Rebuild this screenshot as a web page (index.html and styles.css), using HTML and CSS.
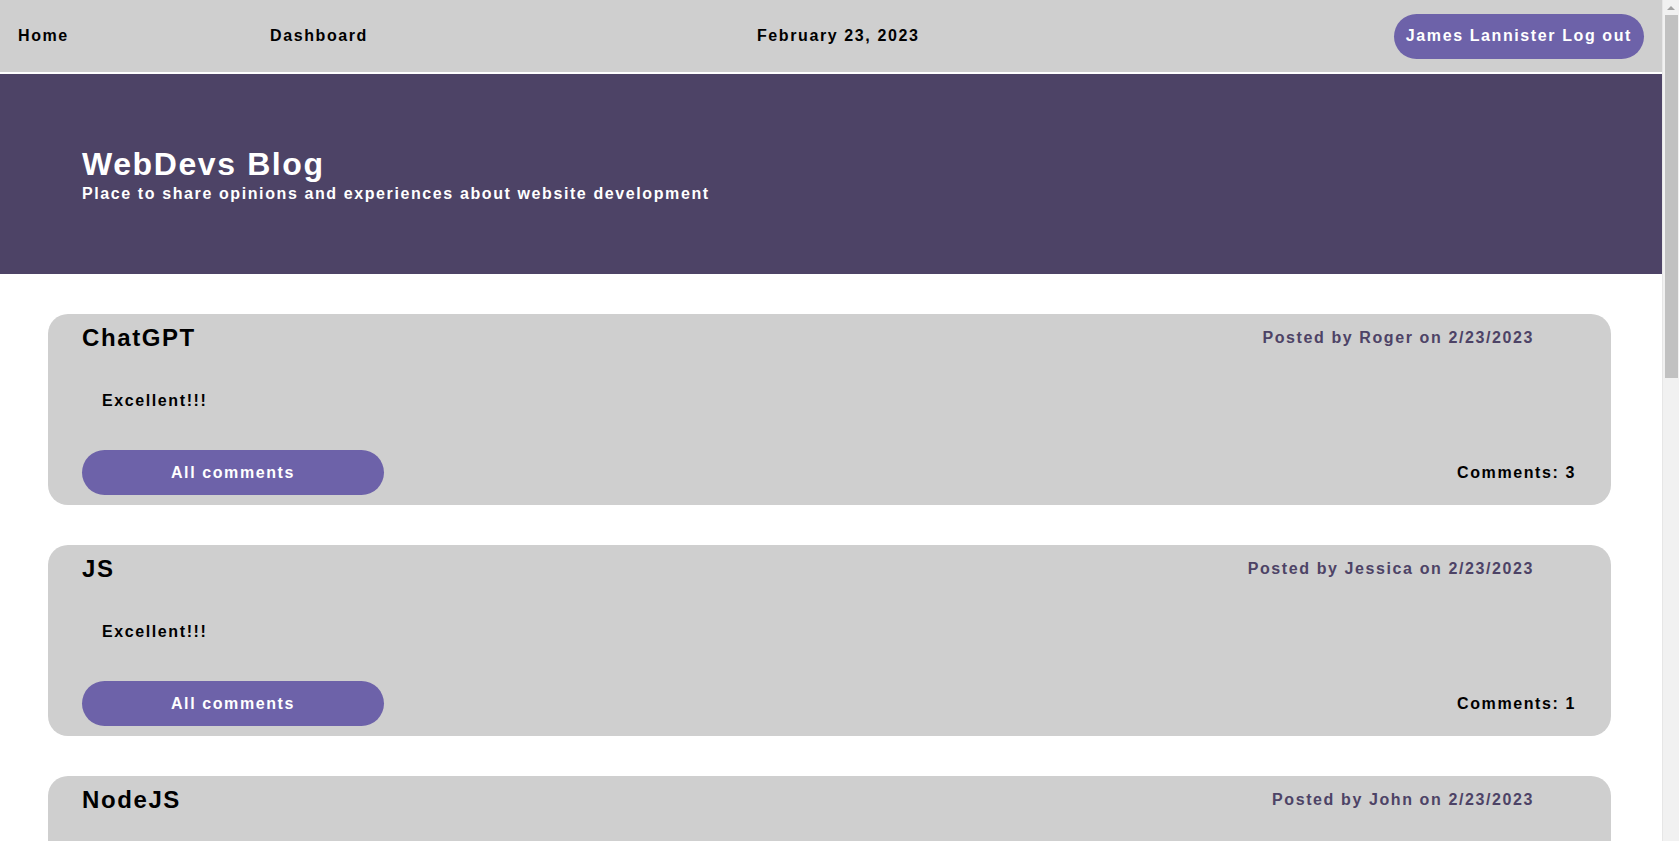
FILE: index.html
```html
<!DOCTYPE html>
<html lang="en">
<head>
<meta charset="utf-8">
<title>WebDevs Blog</title>
<link rel="stylesheet" href="styles.css">
</head>
<body>
<div class="page">
  <nav class="topnav">
    <a class="nav-link" href="#">Home</a>
    <a class="nav-link" href="#">Dashboard</a>
    <span class="nav-date">February 23, 2023</span>
    <div class="nav-user"><button class="pill-btn user-btn">James Lannister Log out</button></div>
  </nav>
  <header class="hero">
    <h1 class="hero-title">WebDevs Blog</h1>
    <p class="hero-sub">Place to share opinions and experiences about website development</p>
  </header>
  <main class="posts">
    <article class="post">
      <div class="post-head"><h2 class="post-title">ChatGPT</h2><span class="post-meta">Posted by Roger on 2/23/2023</span></div>
      <p class="post-body">Excellent!!!</p>
      <div class="post-foot"><button class="pill-btn comments-btn">All comments</button><span class="post-count">Comments: 3</span></div>
    </article>
    <article class="post">
      <div class="post-head"><h2 class="post-title">JS</h2><span class="post-meta">Posted by Jessica on 2/23/2023</span></div>
      <p class="post-body">Excellent!!!</p>
      <div class="post-foot"><button class="pill-btn comments-btn">All comments</button><span class="post-count">Comments: 1</span></div>
    </article>
    <article class="post">
      <div class="post-head"><h2 class="post-title">NodeJS</h2><span class="post-meta">Posted by John on 2/23/2023</span></div>
      <p class="post-body">Excellent!!!</p>
      <div class="post-foot"><button class="pill-btn comments-btn">All comments</button><span class="post-count">Comments: 2</span></div>
    </article>
  </main>
</div>
<div class="scrollbar" aria-hidden="true">
  <span class="sb-arrow"></span>
  <span class="sb-thumb"></span>
</div>
</body>
</html>
```
FILE: styles.css
```css
* { box-sizing: border-box; }

html, body {
  margin: 0;
  padding: 0;
  height: 100%;
}

body {
  display: flex;
  overflow: hidden;
  background: #ffffff;
  color: #000000;
  font-family: "Liberation Sans", Arial, sans-serif;
  font-weight: 700;
  font-size: 16px;
  letter-spacing: 1.6px;
}

.page {
  flex: 1;
  min-width: 0;
  height: 100%;
  overflow: hidden;
}

/* simulated browser scrollbar */
.scrollbar {
  display: flex;
  flex-direction: column;
  align-items: center;
  width: 17px;
  flex: 0 0 17px;
  height: 100%;
  background: #f1f1f1;
  border-left: 1px solid #e6e6e6;
}

.sb-arrow {
  width: 0;
  height: 0;
  margin-top: 6px;
  border-left: 4px solid transparent;
  border-right: 4px solid transparent;
  border-bottom: 4px solid #a3a3a3;
}

.sb-thumb {
  width: 13px;
  height: 363px;
  margin-top: 5px;
  background: #c1c1c1;
}

.topnav {
  display: grid;
  grid-template-columns: 252px 487px 1fr auto;
  align-items: center;
  height: 74px;
  padding: 0 18px 0 18px;
  background: #cfcfcf;
  border-bottom: 2px solid #ffffff;
}

.nav-link {
  color: #000000;
  text-decoration: none;
}

.nav-date {
  color: #000000;
}

.pill-btn {
  font-family: inherit;
  font-weight: 700;
  font-size: 16px;
  letter-spacing: 1.6px;
  color: #ffffff;
  background: #6d62a9;
  border: none;
  border-radius: 23px;
  height: 45px;
  cursor: pointer;
}

.user-btn {
  padding: 0 12px;
}

.hero {
  display: flex;
  flex-direction: column;
  justify-content: center;
  height: 200px;
  padding: 0 0 0 82px;
  background: #4d4366;
  color: #ffffff;
}

.hero-title {
  margin: 0;
  font-size: 32px;
  letter-spacing: 1.6px;
}

.hero-sub {
  margin: 2px 0 0 0;
  font-size: 16px;
}

.posts {
  padding: 40px 51px 40px 48px;
}

.post {
  display: flex;
  flex-direction: column;
  height: 191px;
  margin: 0 0 40px 0;
  padding: 10px 35px 10px 34px;
  background: #cfcfcf;
  border-radius: 20px;
}

.post-head {
  display: flex;
  justify-content: space-between;
  align-items: center;
}

.post-title {
  margin: 0;
  font-size: 24px;
  letter-spacing: 1.6px;
}

.post-meta {
  margin-right: 42px;
  color: #4d4366;
}

.post-body {
  margin: 40px 0 0 20px;
}

.post-foot {
  display: flex;
  justify-content: space-between;
  align-items: center;
  margin-top: auto;
}

.comments-btn {
  width: 302px;
}

.post-count {
  color: #000000;
}
```
